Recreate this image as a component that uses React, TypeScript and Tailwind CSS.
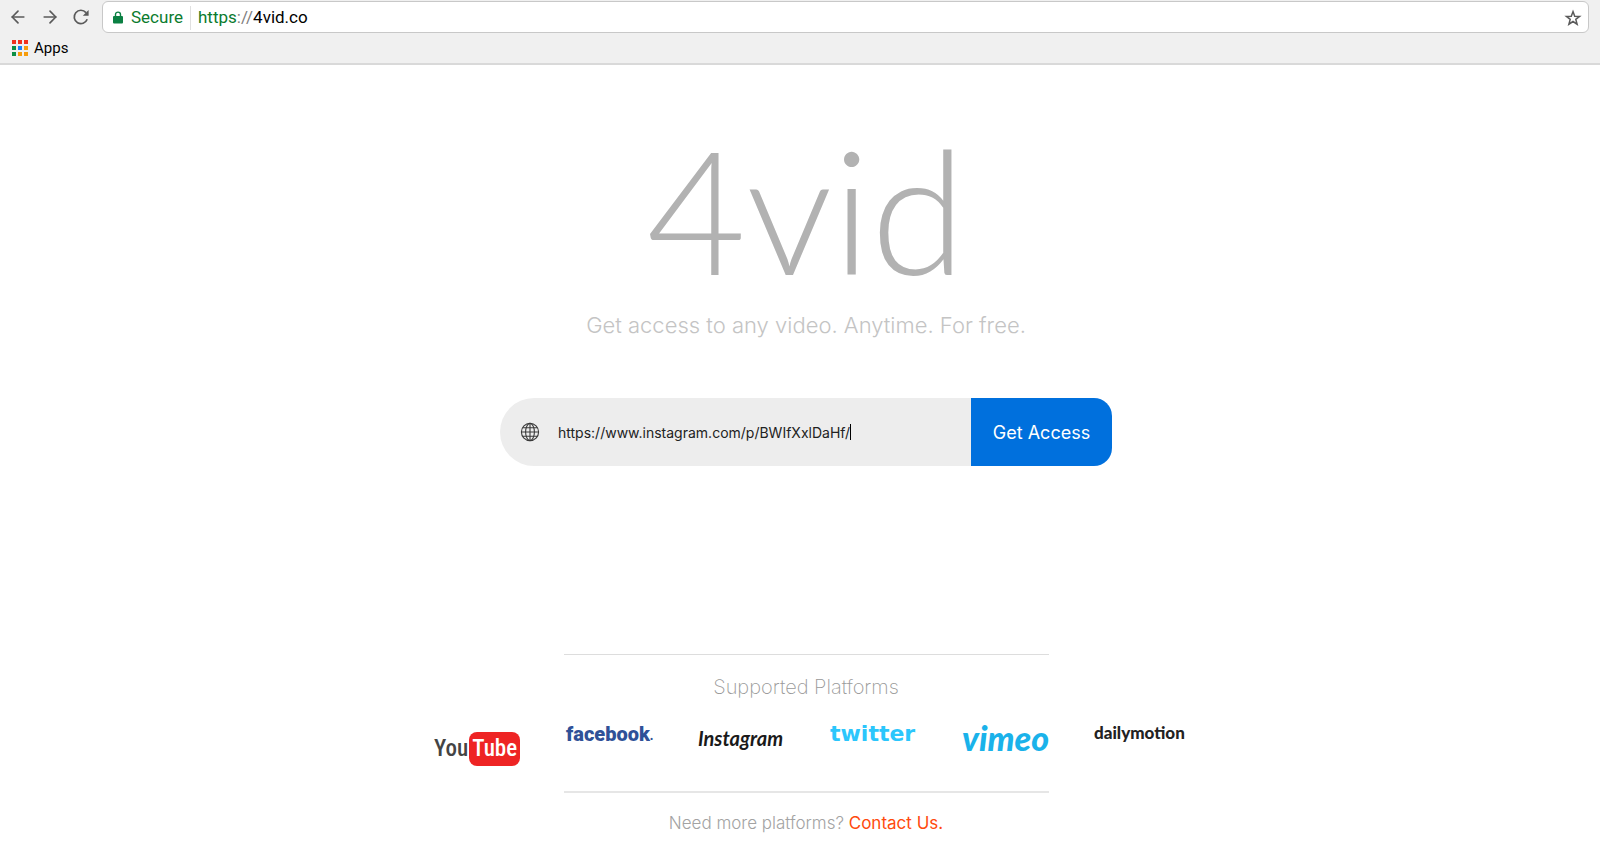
import { ArrowLeft, ArrowRight } from "lucide-react";

const appDots = [
  "bg-[#f0321e]", "bg-[#f0321e]", "bg-[#f0321e]",
  "bg-[#0c8f45]", "bg-[#1a82f7]", "bg-[#f79d0c]",
  "bg-[#0c8f45]", "bg-[#f79d0c]", "bg-[#f79d0c]",
];

const platforms = [
  {
    name: "YouTube",
    className: "pt-2 font-['Roboto_Condensed',Roboto,sans-serif] text-[23px] leading-[34px] font-medium text-[#444444]",
    mark: (
      <>
        You<span className="ml-px rounded-lg bg-[#ee2424] px-[3px] text-white">Tube</span>
      </>
    ),
  },
  {
    name: "Facebook",
    className: "font-[Roboto,sans-serif] text-[20px] leading-[20px] font-black text-[#2f5198]",
    mark: <>facebook<span className="text-xs leading-6">.</span></>,
  },
  {
    name: "Instagram",
    className: "font-[Lato,sans-serif] text-[20px] leading-[28px] font-bold italic text-[#1a1a1a]",
    mark: "Instagram",
  },
  {
    name: "Twitter",
    className: "font-['DejaVu_Sans',sans-serif] text-[22px] leading-[20px] font-bold text-[#2bc6fc]",
    mark: "twitter",
  },
  {
    name: "Vimeo",
    className: "font-[Lato,sans-serif] text-[34px] leading-[28px] font-black italic text-[#1ab2ea]",
    mark: "vimeo",
  },
  {
    name: "Dailymotion",
    className: "font-[Lato,sans-serif] text-[17px] leading-[18px] font-black text-[#222222]",
    mark: "dailymotion",
  },
];

function ReloadIcon() {
  return (
    <svg viewBox="0 0 18 18" className="size-[18px]" fill="none" stroke="currentColor" strokeWidth="1.7">
      <path d="M15.2 11.3A6.7 6.7 0 1 1 14 4.6" />
      <path d="M16.6 2v5.8h-5.8z" fill="currentColor" stroke="none" />
    </svg>
  );
}

function LockIcon() {
  return (
    <svg viewBox="0 0 10 13" className="h-[13px] w-[10px] text-[#0b8043]" fill="none">
      <rect y="5" width="10" height="7.5" rx="1" fill="currentColor" />
      <path d="M2.5 6V3.6a2.5 2.5 0 0 1 5 0V6" stroke="currentColor" strokeWidth="1.4" />
    </svg>
  );
}

function StarIcon() {
  return (
    <svg viewBox="0 0 18 18" className="size-[18px]" fill="none" stroke="currentColor" strokeWidth="1.5">
      <path d="M9 2.6l1.7 4.6 4.9.2-3.8 3 1.3 4.8L9 12.5l-4.1 2.7 1.3-4.8-3.8-3 4.9-.2z" />
    </svg>
  );
}

function GlobeIcon() {
  return (
    <svg viewBox="0 0 20 20" className="size-5 shrink-0 text-[#3a3a3a]" fill="none" stroke="currentColor" strokeWidth="1.1">
      <circle cx="10" cy="10" r="8.6" />
      <ellipse cx="10" cy="10" rx="4.4" ry="8.6" />
      <path d="M10 1.4v17.2M1.4 10h17.2M2.8 5.8h14.4M2.8 14.2h14.4" />
    </svg>
  );
}

function BrowserBar() {
  return (
    <header className="border-b-2 border-[#d9d9d9] bg-[#f0f0f0] font-[Roboto,sans-serif] text-black">
      <div className="flex items-center pt-px pr-[11px] pl-2 text-[#5a5a5a]">
        <div className="flex w-[94px] items-center gap-3">
          <button type="button" aria-label="Back"><ArrowLeft className="size-5" strokeWidth={2} /></button>
          <button type="button" aria-label="Forward"><ArrowRight className="size-5" strokeWidth={2} /></button>
          <button type="button" aria-label="Reload"><ReloadIcon /></button>
        </div>
        <div className="flex h-8 flex-1 items-center rounded-md border border-[#c8c8c8] bg-white pt-px pr-[6px] pl-[10px] text-[17px]">
          <LockIcon />
          <span className="ml-2 text-[#0b7b2e]">Secure</span>
          <span className="mx-[7px] h-6 w-px bg-[#e0e0e0]" />
          <label htmlFor="address" className="text-[#808080]">
            <span className="text-[#0b7b2e]">https</span>://
          </label>
          <input id="address" defaultValue="4vid.co" className="min-w-0 flex-1 text-black outline-none" />
          <button type="button" aria-label="Bookmark"><StarIcon /></button>
        </div>
      </div>
      <div className="flex h-[30px] px-3">
        <button type="button" className="flex items-center gap-[6px] text-[15px]">
          <span className="grid grid-cols-3 gap-[2px]">
            {appDots.map((color, i) => (
              <span key={i} className={`size-[4px] ${color}`} />
            ))}
          </span>
          Apps
        </button>
      </div>
    </header>
  );
}

export default function App() {
  return (
    <div className="min-h-screen bg-white font-[Inter,sans-serif]">
      <BrowserBar />
      <main className="flex flex-col items-center pl-3">
        <h1 className="mt-[52px] font-[Lato,sans-serif] text-[172px] leading-[184px] font-light text-[#b2b2b2]">
          4vid
        </h1>
        <p className="mt-1 text-[22px] leading-[40px] font-light text-[#c4c4c4]">
          Get access to any video. Anytime. For free.
        </p>

        <form className="mt-[53px] flex h-[68px] w-full max-w-[612px]" onSubmit={(e) => e.preventDefault()}>
          <div className="flex flex-1 items-center rounded-l-full bg-[#ededed] pl-5">
            <GlobeIcon />
            <input
              type="text"
              aria-label="Video address"
              defaultValue="https://www.instagram.com/p/BWIfXxlDaHf/"
              className="ml-[18px] field-sizing-content pt-px text-sm text-[#222222] outline-none"
            />
            <span className="h-4 w-px bg-black" />
          </div>
          <button type="submit" className="w-[141px] rounded-r-[18px] bg-[#0070dd] pt-px text-lg text-white">
            Get Access
          </button>
        </form>

        <section className="mt-[188px] flex w-full flex-col items-center">
          <hr className="w-full max-w-[485px] border-[#dddddd]" />
          <h2 className="mt-[18px] text-[20px] leading-[28px] font-extralight text-[#999999]">Supported Platforms</h2>
          <ul className="mt-[23px] ml-12 grid h-[67px] w-full max-w-[792px] grid-cols-6">
            {platforms.map((platform) => (
              <li key={platform.name} className="whitespace-nowrap">
                <a href={`#${platform.name.toLowerCase()}`} aria-label={platform.name} className={`flex ${platform.className}`}>
                  {platform.mark}
                </a>
              </li>
            ))}
          </ul>
          <hr className="w-full max-w-[485px] border-t-2 border-[#e6e6e6]" />
        </section>

        <p className="mt-[18px] text-[17px] leading-6 font-light text-[#a3a3a3]">
          Need more platforms? <a href="#contact" className="font-normal text-[#ff4a0d]">Contact Us.</a>
        </p>
      </main>
    </div>
  );
}
